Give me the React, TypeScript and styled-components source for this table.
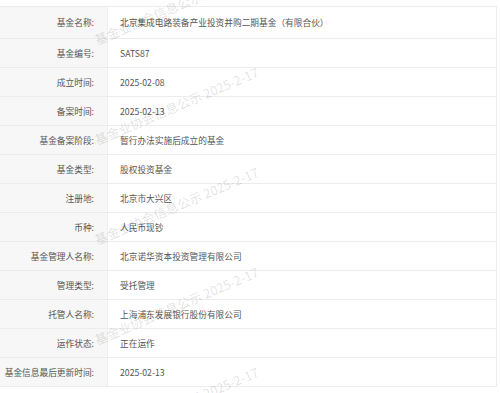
import React from "react";
import styled, { createGlobalStyle } from "styled-components";

const GlobalStyle = createGlobalStyle`
  html, body {
    margin: 0;
    padding: 0;
    background: #ffffff;
  }
  body {
    font-family: "Noto Sans CJK SC", "Noto Sans", sans-serif;
  }
`;

const Page = styled.div`
  position: relative;
  width: 500px;
  height: 393px;
  overflow: hidden;
  background: #fff;
  padding-top: 6px;
  box-sizing: border-box;
`;

const Table = styled.div`
  width: 497px;
  border-top: 1px solid #ececec;
  border-right: 1px solid #ececec;
  box-sizing: border-box;
  display: flex;
  flex-direction: column;
`;

const Row = styled.div<{ $h: number }>`
  display: grid;
  grid-template-columns: 108px 1fr;
  height: ${(p) => p.$h}px;
  border-bottom: 1px solid #ececec;
  box-sizing: border-box;
`;

const Label = styled.div`
  background: #f7f7f7;
  color: #555;
  font-size: 8.7px;
  display: flex;
  align-items: center;
  justify-content: flex-end;
  padding-right: 13px;
  white-space: nowrap;
  border-right: 1px solid #efefef;
`;

const Value = styled.div`
  color: #555;
  font-size: 8.7px;
  display: flex;
  align-items: center;
  padding-left: 12px;
  white-space: nowrap;
`;

const MarkLayer = styled.div`
  position: absolute;
  inset: 0;
  pointer-events: none;
`;

const Mark = styled.span`
  position: absolute;
  left: 98px;
  font-size: 12.8px;
  line-height: 14px;
  color: rgba(0, 0, 0, 0.13);
  white-space: nowrap;
  transform-origin: 0 100%;
  transform: rotate(-23deg);
  font-family: "Noto Sans CJK SC", "Noto Sans", sans-serif;
`;

const rows: [string, string][] = [
  ["基金名称:", "北京集成电路装备产业投资并购二期基金（有限合伙）"],
  ["基金编号:", "SATS87"],
  ["成立时间:", "2025-02-08"],
  ["备案时间:", "2025-02-13"],
  ["基金备案阶段:", "暂行办法实施后成立的基金"],
  ["基金类型:", "股权投资基金"],
  ["注册地:", "北京市大兴区"],
  ["币种:", "人民币现钞"],
  ["基金管理人名称:", "北京诺华资本投资管理有限公司"],
  ["管理类型:", "受托管理"],
  ["托管人名称:", "上海浦东发展银行股份有限公司"],
  ["运作状态:", "正在运作"],
  ["基金信息最后更新时间:", "2025-02-13"],
];

const marks = [47, 147, 247, 347, 447];

export default function App() {
  return (
    <>
      <GlobalStyle />
      <Page>
        <Table>
          {rows.map(([k, v], i) => (
            <Row key={k} $h={i === 0 ? 32 : 29}>
              <Label>{k}</Label>
              <Value>{v}</Value>
            </Row>
          ))}
        </Table>
        <MarkLayer>
          {marks.map((y) => (
            <Mark key={y} style={{ top: y - 14 }}>
              基金业协会信息公示 2025-2-17
            </Mark>
          ))}
        </MarkLayer>
      </Page>
    </>
  );
}
